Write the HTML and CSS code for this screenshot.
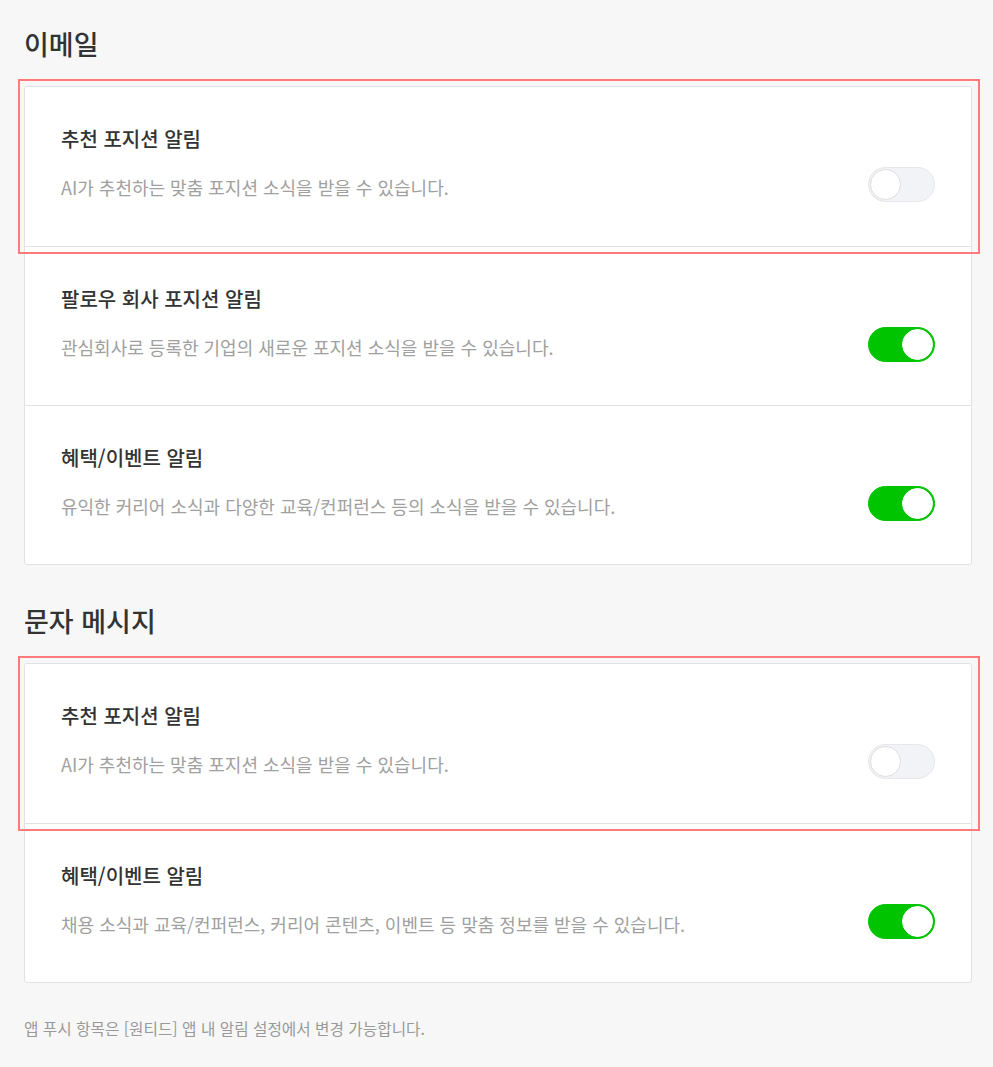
FILE: index.html
```html
<!DOCTYPE html>
<html lang="ko">
<head>
<meta charset="utf-8">
<title>알림 설정</title>
<link rel="stylesheet" href="styles.css">
</head>
<body>
<main class="page">
  <section class="group">
    <h2 class="group-title">이메일</h2>
    <div class="card">
      <div class="row is-highlighted">
        <div class="row-title">추천 포지션 알림</div>
        <div class="row-line">
          <p class="row-desc">AI가 추천하는 맞춤 포지션 소식을 받을 수 있습니다.</p>
          <span class="toggle"><span class="knob"></span></span>
        </div>
      </div>
      <div class="row">
        <div class="row-title">팔로우 회사 포지션 알림</div>
        <div class="row-line">
          <p class="row-desc">관심회사로 등록한 기업의 새로운 포지션 소식을 받을 수 있습니다.</p>
          <span class="toggle is-on"><span class="knob"></span></span>
        </div>
      </div>
      <div class="row">
        <div class="row-title">혜택/이벤트 알림</div>
        <div class="row-line">
          <p class="row-desc">유익한 커리어 소식과 다양한 교육/컨퍼런스 등의 소식을 받을 수 있습니다.</p>
          <span class="toggle is-on"><span class="knob"></span></span>
        </div>
      </div>
    </div>
  </section>
  <section class="group">
    <h2 class="group-title">문자 메시지</h2>
    <div class="card">
      <div class="row is-highlighted">
        <div class="row-title">추천 포지션 알림</div>
        <div class="row-line">
          <p class="row-desc">AI가 추천하는 맞춤 포지션 소식을 받을 수 있습니다.</p>
          <span class="toggle"><span class="knob"></span></span>
        </div>
      </div>
      <div class="row">
        <div class="row-title">혜택/이벤트 알림</div>
        <div class="row-line">
          <p class="row-desc">채용 소식과 교육/컨퍼런스, 커리어 콘텐츠, 이벤트 등 맞춤 정보를 받을 수 있습니다.</p>
          <span class="toggle is-on"><span class="knob"></span></span>
        </div>
      </div>
    </div>
  </section>
  <p class="footnote">앱 푸시 항목은 [원티드] 앱 내 알림 설정에서 변경 가능합니다.</p>
</main>
</body>
</html>
```
FILE: styles.css
```css
* { box-sizing: border-box; }
html, body {
  margin: 0;
  background: #f7f7f7;
}
body {
  font-family: "Noto Sans CJK KR", "Noto Sans", sans-serif;
  color: #333;
}
.page {
  width: 948px;
  margin-left: 24px;
  padding-top: 26px;
  padding-bottom: 20px;
}
.group + .group {
  margin-top: 38px;
}
.group-title {
  margin: 0 0 24px;
  font-size: 27px;
  line-height: 36px;
  font-weight: 500;
  color: #333;
}
.card {
  background: #fff;
  border: 1px solid #e1e2e3;
  border-radius: 3px;
}
.row {
  position: relative;
  padding: 37px 36px 43px;
  border-bottom: 1px solid #e1e2e3;
}
.row:first-child {
  padding-bottom: 44px;
}
.row:last-child {
  border-bottom: 0;
}
.row.is-highlighted::after {
  content: "";
  position: absolute;
  top: -8px;
  left: -7px;
  right: -9px;
  bottom: -8px;
  border: 2px solid #ff7b7b;
  pointer-events: none;
}
.row-title {
  font-size: 20px;
  line-height: 30px;
  font-weight: 500;
  color: #333;
}
.row-line {
  margin-top: 13px;
  display: flex;
  align-items: center;
  justify-content: space-between;
}
.row-desc {
  margin: 4px 0 0;
  font-size: 18px;
  line-height: 24px;
  color: #a0a0a0;
}
.toggle {
  position: relative;
  flex: none;
  width: 67px;
  height: 35px;
  border-radius: 18px;
  background: #f2f3f6;
  border: 1px solid #e6e7ea;
}
.knob {
  position: absolute;
  top: 1px;
  left: 1px;
  width: 31px;
  height: 31px;
  border-radius: 50%;
  background: #fff;
  border: 1px solid #dedede;
}
.toggle.is-on {
  background: #00c400;
  border-color: #00c400;
}
.toggle.is-on .knob {
  left: auto;
  right: 1px;
  border-color: #fff;
}
.footnote {
  margin: 35px 0 0;
  font-size: 15.7px;
  line-height: 22px;
  color: #999;
}
```
